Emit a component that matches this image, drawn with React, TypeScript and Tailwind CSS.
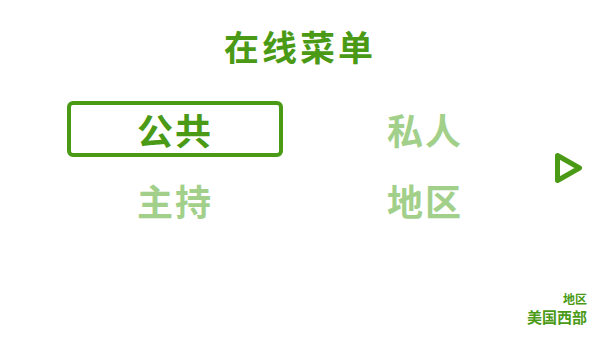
const items = [
  { label: "公共", active: true },
  { label: "私人", active: false },
  { label: "主持", active: false },
  { label: "地区", active: false },
];

export default function App() {
  return (
    <div
      className="relative flex h-[337px] w-[600px] flex-col items-center bg-white"
      style={{ fontFamily: '"Noto Sans CJK SC", "Noto Sans", sans-serif' }}
    >
      <h1 className="mt-[24px] text-[35px] font-bold leading-[44px] tracking-[3px] text-[#4b9a16]">在线菜单</h1>
      <div className="mt-[33px] grid grid-cols-[216px_216px] gap-x-[34px] gap-y-[15px]">
        {items.map((it) => (
          <div
            key={it.label}
            className={`flex h-[56px] items-center justify-center rounded-[6px] border-[4px] text-[36px] font-bold tracking-[2px] ${
              it.active ? "border-[#4b9a16] text-[#4b9a16]" : "border-transparent text-[#a2d08b]"
            }`}
          >
            {it.label}
          </div>
        ))}
      </div>
      <svg className="absolute left-[553px] top-[151px]" width="32" height="34" viewBox="0 0 32 34" fill="none">
        <path
          d="M4.5 4.5 L26.5 17 L4.5 29.5 Z"
          stroke="#4b9a16"
          strokeWidth="5"
          strokeLinejoin="round"
        />
      </svg>
      <div className="absolute bottom-[10px] right-[13px] flex flex-col items-end font-bold text-[#4b9a16]">
        <span className="text-[12px] leading-[16px]">地区</span>
        <span className="text-[15px] leading-[20px]">美国西部</span>
      </div>
    </div>
  );
}
